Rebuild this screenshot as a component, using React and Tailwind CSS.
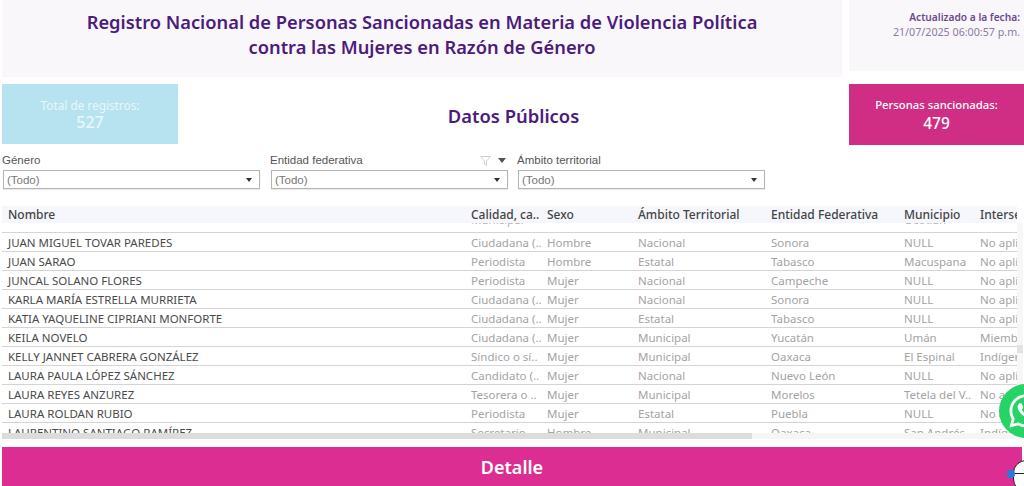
import React from 'react';
import { FaWhatsapp } from 'react-icons/fa';

const rows = [
    ['JUAN MIGUEL TOVAR PAREDES', 'Ciudadana (..', 'Hombre', 'Nacional', 'Sonora', 'NULL', 'No apli'],
    ['JUAN SARAO', 'Periodista', 'Hombre', 'Estatal', 'Tabasco', 'Macuspana', 'No apli'],
    ['JUNCAL SOLANO FLORES', 'Periodista', 'Mujer', 'Nacional', 'Campeche', 'NULL', 'No apli'],
    ['KARLA MARÍA ESTRELLA MURRIETA', 'Ciudadana (..', 'Mujer', 'Nacional', 'Sonora', 'NULL', 'No apli'],
    ['KATIA YAQUELINE CIPRIANI MONFORTE', 'Ciudadana (..', 'Mujer', 'Estatal', 'Tabasco', 'NULL', 'No apli'],
    ['KEILA NOVELO', 'Ciudadana (..', 'Mujer', 'Municipal', 'Yucatán', 'Umán', 'Miemb'],
    ['KELLY JANNET CABRERA GONZÁLEZ', 'Síndico o sí..', 'Mujer', 'Municipal', 'Oaxaca', 'El Espinal', 'Indíger'],
    ['LAURA PAULA LÓPEZ SÁNCHEZ', 'Candidato (..', 'Mujer', 'Nacional', 'Nuevo León', 'NULL', 'No apli'],
    ['LAURA REYES ANZUREZ', 'Tesorera o ..', 'Mujer', 'Municipal', 'Morelos', 'Tetela del V..', 'No apli'],
    ['LAURA ROLDAN RUBIO', 'Periodista', 'Mujer', 'Estatal', 'Puebla', 'NULL', 'No apli'],
    ['LAURENTINO SANTIAGO RAMÍREZ', 'Secretario ..', 'Hombre', 'Municipal', 'Oaxaca', 'San Andrés', 'Indíger'],
];

const columns = 'grid grid-cols-[463px_76px_91px_133px_133px_76px_37px] pl-[6px]';

const Filter = ({ label, width, children }) => (
    <div className={width}>
        <div className="flex items-center justify-between h-[15px] text-[11.5px] leading-[15px] text-[#555]">
            <span>{label}</span>
            {children}
        </div>
        <div className="mt-[2px] ml-[1px] h-[19px] border border-[#b4b4b4] flex items-center justify-between pl-[3px] pr-[7px] text-[11.5px] leading-[19px] text-[#777] shadow-[0_1px_1px_rgba(0,0,0,0.08)]">
            <span className="pt-[1px]">(Todo)</span>
            <span className="w-0 h-0 border-x-[3.5px] border-x-transparent border-t-[4px] border-t-[#333]" />
        </div>
    </div>
);

const App = () => {
    return (
        <div className="relative w-[1024px] h-[486px] overflow-hidden bg-white font-['Noto_Sans',sans-serif]">
            {/* Encabezado */}
            <div className="flex items-start pl-[2px] gap-[7px] h-[84px]">
                <div className="w-[840px] h-[77px] bg-[#faf7fb] flex items-center justify-center text-center">
                    <h1 className="text-[18.3px] leading-[25px] font-semibold text-[#4b1c7c] pb-[10px]">
                        Registro Nacional de Personas Sancionadas en Materia de Violencia Política<br />
                        contra las Mujeres en Razón de Género
                    </h1>
                </div>
                <div className="w-[175px] h-[71px] bg-[#faf7fb] text-right pr-[4px] pt-[10px] text-[10.5px] leading-[15px]">
                    <div className="text-[10.2px] font-semibold text-[#6b4a8e]">Actualizado a la fecha:</div>
                    <div className="text-[10.7px] text-[#8c7aa3]">21/07/2025 06:00:57 p.m.</div>
                </div>
            </div>

            {/* Totales */}
            <div className="flex items-start pl-[2px] gap-[7px] h-[69px]">
                <div className="w-[176px] h-[60px] bg-[#b7e3f0] flex flex-col items-center justify-center text-[#e9f6fa]">
                    <div className="text-[11.8px] leading-[16px]">Total de registros:</div>
                    <div className="text-[16px] leading-[19px] font-medium">527</div>
                </div>
                <div className="w-[657px] h-[60px] pt-[4px] flex items-center justify-center text-[18.4px] font-semibold text-[#4b1c7c]">
                    Datos Públicos
                </div>
                <div className="w-[175px] h-[61px] bg-[#cf2e84] flex flex-col items-center justify-center text-white">
                    <div className="text-[11.3px] leading-[16px] font-medium">Personas sancionadas:</div>
                    <div className="text-[15.5px] leading-[20px] font-medium">479</div>
                </div>
            </div>

            {/* Filtros */}
            <div className="flex items-start h-[53px] pl-[2px] font-['Liberation_Sans',sans-serif]">
                <Filter label="Género" width="w-[258px]" />
                <div className="w-[10px]" />
                <Filter label="Entidad federativa" width="w-[238px]">
                    <span className="flex items-center gap-[7px] pr-[2px]">
                        <svg width="11" height="10" viewBox="0 0 11 10" fill="none" stroke="#c4c4c4" strokeWidth="0.8">
                            <path d="M0.5 0.5h10L6.5 5v4.5l-2-1.5V5z" />
                        </svg>
                        <span className="w-0 h-0 border-x-[4px] border-x-transparent border-t-[5px] border-t-[#555]" />
                    </span>
                </Filter>
                <div className="w-[9px]" />
                <Filter label="Ámbito territorial" width="w-[248px]" />
            </div>

            {/* Tabla */}
            <div className={`${columns} ml-[2px] mr-[7px] h-[17px] bg-[#f5f7fc] text-[12px] leading-[17px] text-[#444] font-medium whitespace-nowrap`}>
                <div>Nombre</div>
                <div>Calidad, ca..</div>
                <div>Sexo</div>
                <div>Ámbito Territorial</div>
                <div>Entidad Federativa</div>
                <div>Municipio</div>
                <div className="overflow-hidden">Intersec</div>
            </div>
            <div className="ml-[2px] mr-[7px] h-[210px] overflow-hidden text-[11.5px] leading-[20px]">
                <div className={`${columns} h-[10px] overflow-hidden border-b border-[#d4d4d4] text-[#b5b5b5] whitespace-nowrap`}>
                    <div />
                    <div className="-mt-[13px]">Municipal</div>
                    <div />
                    <div />
                    <div />
                    <div className="-mt-[13px]">Ocotlán</div>
                    <div />
                </div>
                {rows.map((row) => (
                    <div key={row[0]} className={`${columns} h-[19px] border-b border-[#d4d4d4] text-[#a3a3a3] whitespace-nowrap`}>
                        {row.map((cell, i) => (
                            <div key={i} className={i === 0 ? 'text-[#4a4a4a]' : 'overflow-hidden'}>{cell}</div>
                        ))}
                    </div>
                ))}
            </div>

            {/* Scroll horizontal */}
            <div className="ml-[2px] mr-[9px] h-[6px] bg-[#f5f5f5]">
                <div className="w-[750px] h-full bg-[#dcdcdc]" />
            </div>

            {/* Detalle */}
            <div className="mt-[8px] ml-[2px] mr-[2px] h-[39px] pt-[2px] bg-[#dc2e92] flex items-center justify-center text-white text-[18px] font-semibold">
                Detalle
            </div>

            {/* Scroll vertical */}
            <div className="absolute left-[1017px] top-[223px] w-[6px] h-[217px] bg-[#f7f7f7]">
                <div className="mt-[122px] h-[8px] bg-[#e2e2e2]" />
            </div>

            {/* WhatsApp */}
            <div className="absolute left-[999px] top-[384px] w-[54px] h-[54px] rounded-full bg-[#25d366] flex items-center justify-center">
                <FaWhatsapp className="text-white w-[38px] h-[38px]" />
            </div>

            {/* Asistente */}
            <div className="absolute left-[1013px] top-[460px] w-[26px] h-[32px] rounded-full bg-white border border-[#222]" />
            <div className="absolute left-[1015px] top-[473px] w-[10px] h-[1px] bg-[#222]" />
            <div className="absolute left-[1007px] top-[470px] w-[8px] h-[8px] rounded-full bg-[#1d7fe0]" />
        </div>
    );
};

export default App;
